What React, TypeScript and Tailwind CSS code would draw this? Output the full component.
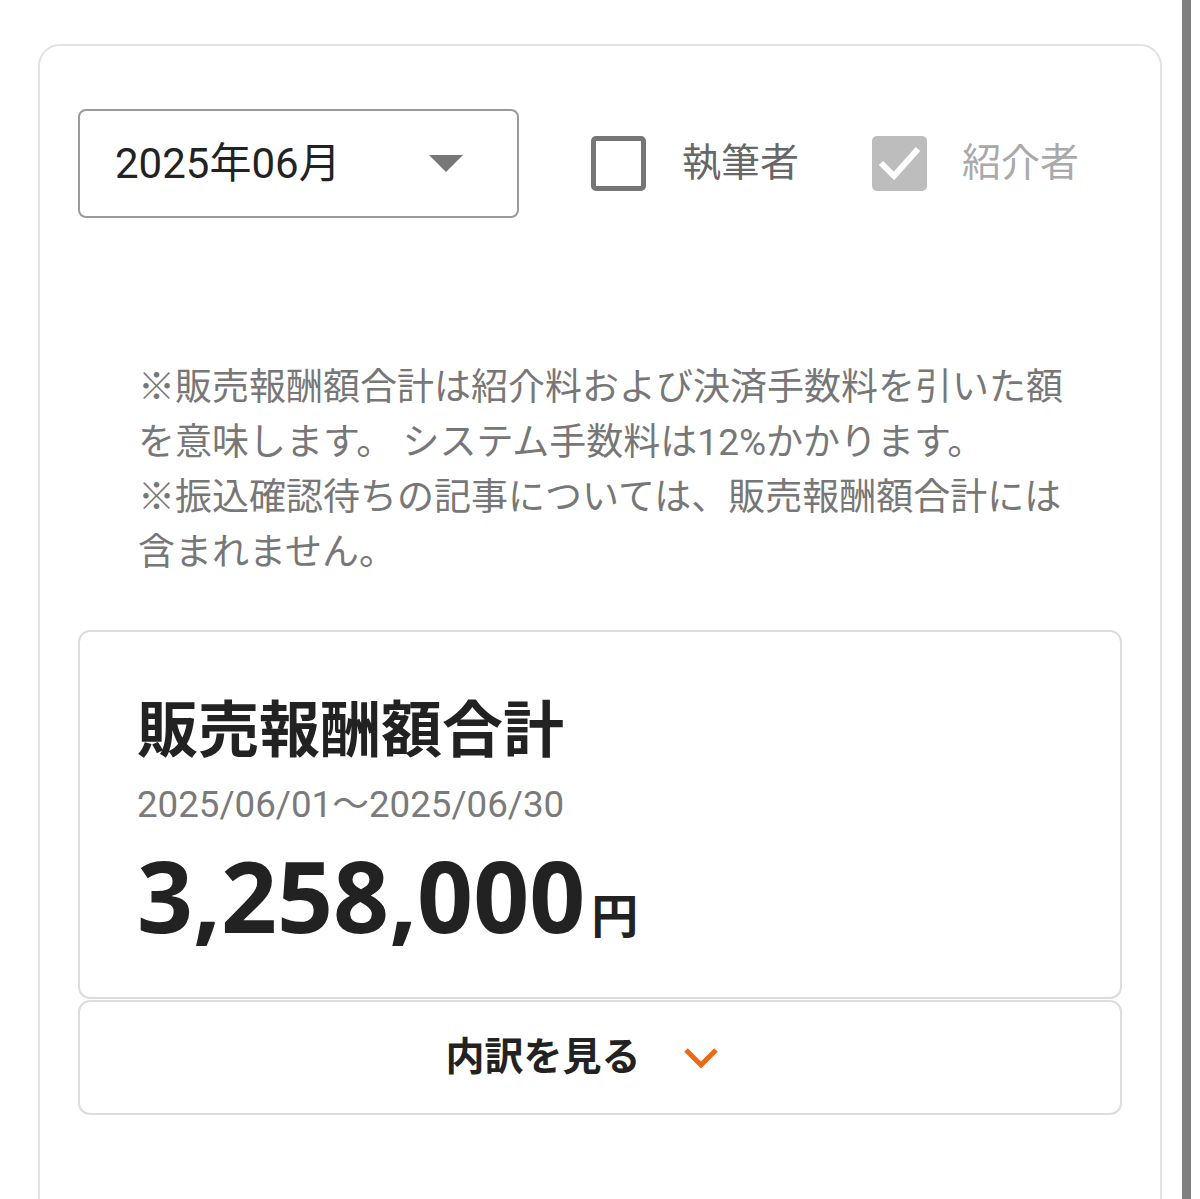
import React from "react";

const jp = { fontFamily: 'Roboto, "Noto Sans CJK JP", sans-serif' };

export default function App() {
  return (
    <div className="w-[1200px] h-[1199px] bg-white flex overflow-hidden" style={jp}>
      <div className="ml-[38px] mt-[44px] w-[1124px] h-[1300px] shrink-0 border-2 border-[#e2e2e2] rounded-[22px] px-[38px] pt-[63px]">
        {/* controls row */}
        <div className="flex items-center">
          <div className="w-[441px] h-[109px] border-2 border-[#9a9a9a] rounded-[8px] flex items-center pl-[35px] pr-[54px] justify-between">
            <span className="text-[42px] text-[#222] leading-none">2025年06月</span>
            <svg width="34" height="17" viewBox="0 0 34 17">
              <polygon points="0,0 34,0 17,17" fill="#777" />
            </svg>
          </div>
          <div className="ml-[72px] w-[55px] h-[55px] border-[5px] border-[#767676] rounded-[5px]" />
          <span className="ml-[36px] text-[39px] text-[#676767] leading-none">執筆者</span>
          <div className="ml-[73px] w-[55px] h-[55px] bg-[#bdbdbd] rounded-[5px] flex items-center justify-center">
            <svg width="55" height="55" viewBox="0 0 55 55">
              <polyline points="9,27 22,40 46,13" fill="none" stroke="#fff" strokeWidth="6" />
            </svg>
          </div>
          <span className="ml-[35px] text-[39px] text-[#a9a9a9] leading-none">紹介者</span>
        </div>

        {/* notes */}
        <div className="mt-[142px] pl-[60px] text-[37px] leading-[55px] text-[#777]">
          <div>※販売報酬額合計は紹介料および決済手数料を引いた額</div>
          <div>を意味します。 システム手数料は12%かかります。</div>
          <div>※振込確認待ちの記事については、販売報酬額合計には</div>
          <div>含まれません。</div>
        </div>

        {/* summary card */}
        <div className="mt-[50px] w-[1044px] h-[369px] border-2 border-[#dcdcdc] rounded-[12px] pl-[57px] pt-[63px]">
          <div className="text-[61px] font-bold leading-[72px] text-[#222]">販売報酬額合計</div>
          <div className="mt-[16px] text-[36.7px] leading-[43px] text-[#7a7a7a]">2025/06/01〜2025/06/30</div>
          <div className="mt-[17px] flex items-baseline text-[#222]">
            <span className="text-[98px] font-bold leading-[104px]" style={{ fontFamily: '"Noto Sans", "Open Sans", sans-serif' }}>3,258,000</span>
            <span className="ml-[6px] text-[47px] font-bold leading-none" style={jp}>円</span>
          </div>
        </div>

        {/* breakdown button */}
        <div className="mt-[1px] w-[1044px] h-[115px] border-2 border-[#dcdcdc] rounded-[12px] flex items-center justify-center pr-[36px]">
          <span className="text-[39px] font-bold text-[#222] leading-none">内訳を見る</span>
          <svg className="ml-[42px]" width="36" height="22" viewBox="0 0 36 22">
            <polyline points="3,3 18,18 33,3" fill="none" stroke="#ec6a14" strokeWidth="5" />
          </svg>
        </div>
      </div>
      <div className="ml-[20px] w-[9px] h-full bg-[#7f7f7f] shrink-0" />
    </div>
  );
}
